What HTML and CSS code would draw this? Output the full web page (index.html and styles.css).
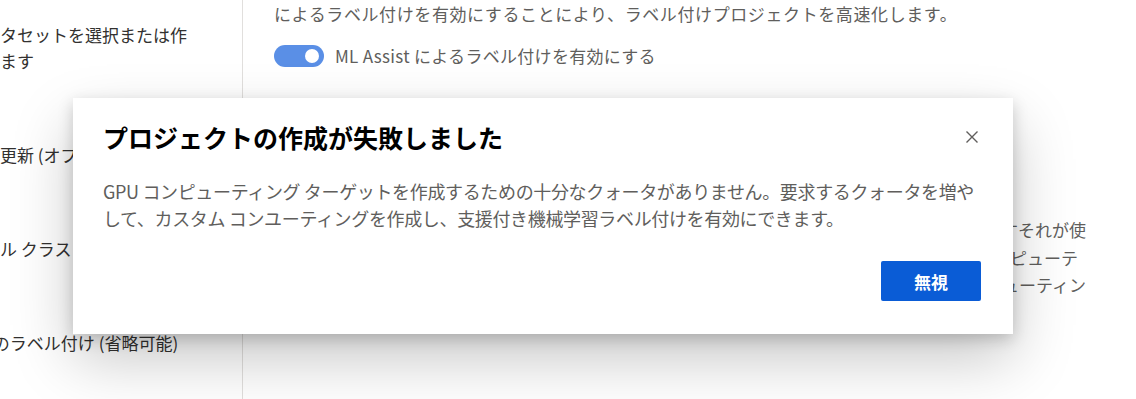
FILE: index.html
```html
<!DOCTYPE html>
<html lang="ja">
<head>
<meta charset="utf-8">
<title>ラベル付けプロジェクト</title>
<link rel="stylesheet" href="styles.css">
</head>
<body>
<div class="page">
  <nav class="steps">
    <div class="step">データセットを選択または作<br>成します</div>
    <div class="step">増分更新 (オプション)</div>
    <div class="step">ラベル クラス</div>
    <div class="step">ML のラベル付け (省略可能)</div>
  </nav>
  <main class="content">
    <p class="desc">機械学習モデルを使用してデータの事前ラベル付けを行う ML Assist<br>によるラベル付けを有効にすることにより、ラベル付けプロジェクトを高速化します。</p>
    <div class="toggle-row">
      <span class="toggle"><span class="knob"></span></span>
      <span class="toggle-label">ML Assist によるラベル付けを有効にする</span>
    </div>
    <div class="more">
      <div class="line">コンピューティングは自動的に作成されますそれが使</div>
      <div class="line l2">用できない場合は、カスタム コンピューテ</div>
      <div class="line">ィングを選択してください。カスタム コンピューティン</div>
    </div>
  </main>
</div>
<div class="dialog" role="dialog">
  <div class="dialog-head">
    <h2 class="dialog-title">プロジェクトの作成が失敗しました</h2>
    <button class="close" aria-label="閉じる">
      <svg width="16" height="16" viewBox="0 0 16 16"><path d="M2.5 2.5 L13.5 13.5 M13.5 2.5 L2.5 13.5" stroke="#605e5c" stroke-width="1.4" fill="none"/></svg>
    </button>
  </div>
  <p class="dialog-body">GPU コンピューティング ターゲットを作成するための十分なクォータがありません。要求するクォータを増やして、カスタム コンユーティングを作成し、支援付き機械学習ラベル付けを有効にできます。</p>
  <div class="dialog-foot">
    <button class="primary">無視</button>
  </div>
</div>
</body>
</html>
```
FILE: styles.css
```css
html, body {
  margin: 0;
  padding: 0;
  background: #ffffff;
}
body {
  width: 1136px;
  height: 399px;
  overflow: hidden;
  position: relative;
  font-family: "Noto Sans CJK JP", "Noto Sans", sans-serif;
}
.page {
  display: flex;
  height: 399px;
}
.steps {
  width: 243px;
  flex: none;
  border-right: 1px solid #e1dfdd;
  overflow: hidden;
  display: flex;
  flex-direction: column;
  gap: 68px;
  padding-top: 22px;
  box-sizing: border-box;
}
.step {
  margin-left: -34px;
  font-size: 17px;
  line-height: 26px;
  color: #323130;
  white-space: nowrap;
}
.content {
  flex: 1;
  min-width: 0;
  padding: 0 50px 0 31px;
  color: #605e5c;
}
.desc {
  margin: -27px 0 0 0;
  font-size: 17px;
  line-height: 27px;
  letter-spacing: 0.6px;
  white-space: nowrap;
}
.toggle-row {
  display: flex;
  align-items: center;
  gap: 11px;
  margin-top: 18px;
}
.toggle {
  width: 50px;
  height: 22px;
  border-radius: 11px;
  background: #5a8fe6;
  display: flex;
  align-items: center;
  justify-content: flex-end;
  padding-right: 5px;
  box-sizing: border-box;
}
.knob {
  width: 14px;
  height: 14px;
  border-radius: 50%;
  background: #ffffff;
}
.toggle-label {
  font-size: 17px;
  line-height: 22px;
  letter-spacing: 0.3px;
}
.more {
  margin-top: 149px;
  font-size: 17px;
  line-height: 27.5px;
}
.line {
  text-align: right;
  white-space: nowrap;
}
.l2 {
  padding-right: 8px;
}
.dialog {
  position: absolute;
  left: 73px;
  top: 98px;
  width: 940px;
  height: 236px;
  background: #ffffff;
  box-shadow: 0 25.6px 57.6px rgba(0,0,0,0.22), 0 4.8px 14.4px rgba(0,0,0,0.18);
  box-sizing: border-box;
  padding: 0 30px 0 30px;
  display: flex;
  flex-direction: column;
}
.dialog-head {
  display: flex;
  align-items: center;
  justify-content: space-between;
  height: 78px;
}
.dialog-title {
  margin: 0;
  font-size: 25px;
  font-weight: 700;
  color: #000000;
  line-height: 32px;
}
.close {
  border: none;
  background: none;
  padding: 0;
  width: 16px;
  height: 16px;
  margin-right: 3px;
  display: flex;
}
.dialog-body {
  margin: 0;
  padding-top: 2px;
  font-size: 18px;
  line-height: 27px;
  letter-spacing: -0.35px;
  color: #605e5c;
}
.dialog-foot {
  display: flex;
  justify-content: flex-end;
  margin-top: 29px;
  padding-right: 2px;
}
.primary {
  width: 100px;
  height: 40px;
  border: none;
  border-radius: 2px;
  background: #0a5cd6;
  color: #ffffff;
  font-family: inherit;
  font-size: 17px;
  font-weight: 700;
}
```
